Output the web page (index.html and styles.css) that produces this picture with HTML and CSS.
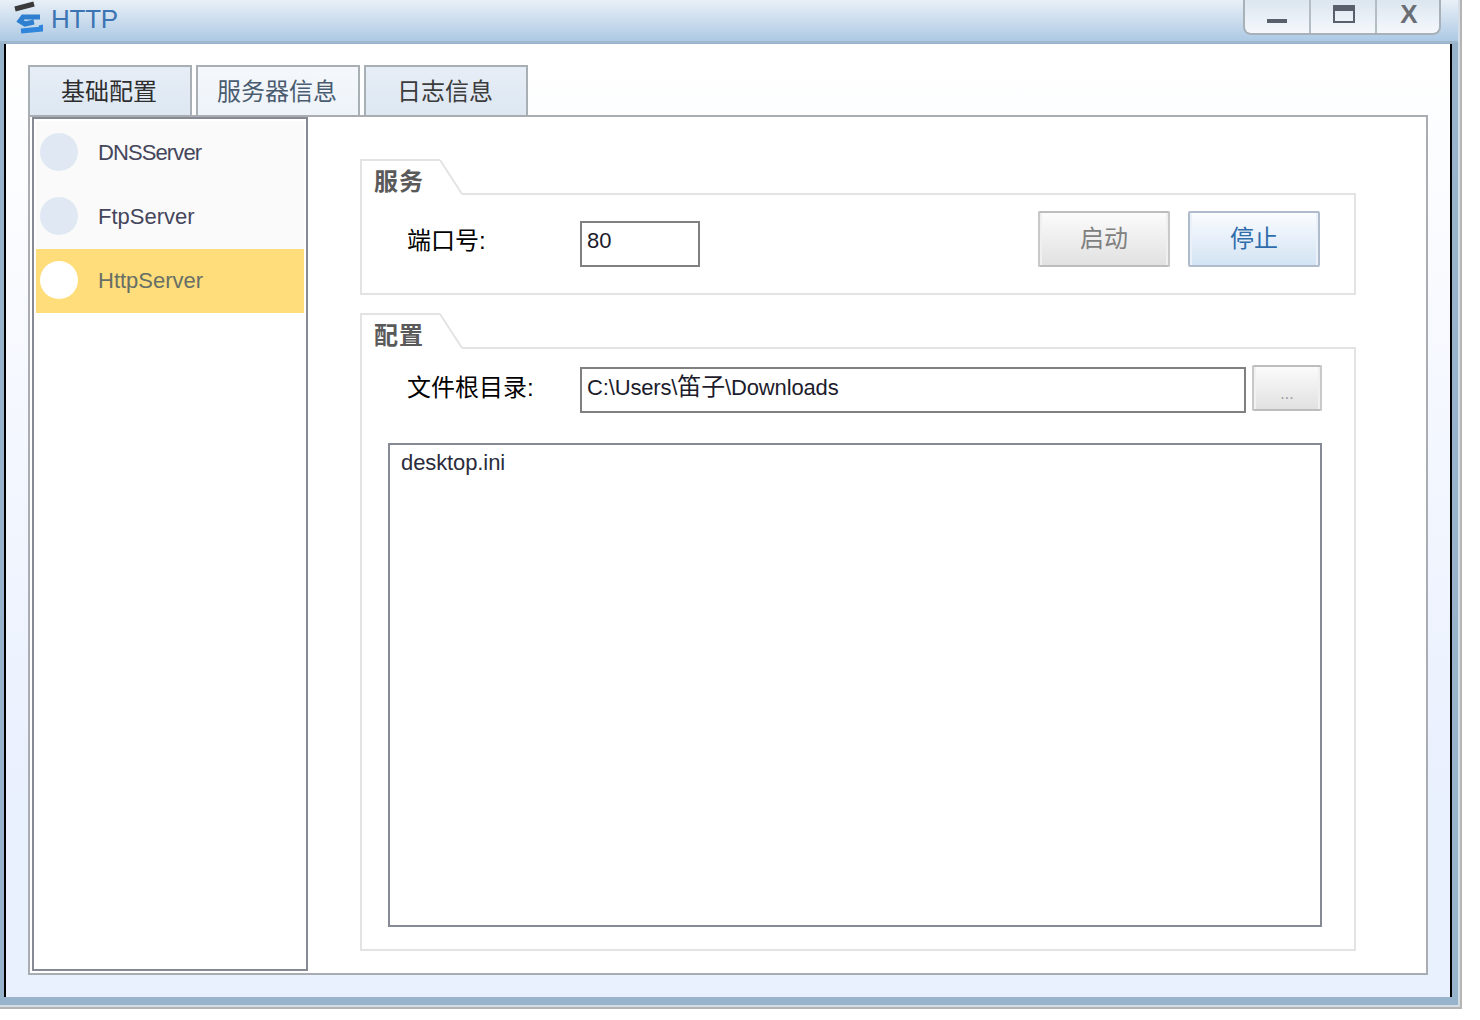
FILE: index.html
```html
<!DOCTYPE html>
<html lang="zh-CN">
<head>
<meta charset="utf-8">
<title>HTTP</title>
<link rel="stylesheet" href="styles.css">
</head>
<body>
<div class="window">
  <header class="titlebar">
    <svg class="app-icon" width="30" height="36" viewBox="0 0 30 36">
      <path d="M2 9 L21 4" stroke="#3a3a3a" stroke-width="5" fill="none"/>
      <path d="M27 17 H10 L7 21 L12 24 L21 22" stroke="#2f7fd0" stroke-width="5" fill="none"/>
      <path d="M8 31 L29 29 L28 25" stroke="#2f86dc" stroke-width="5" fill="none"/>
    </svg>
    <span class="app-title">HTTP</span>
    <div class="controls">
      <div class="control control-min"><span class="icon-min"></span></div>
      <div class="control"><span class="icon-max"></span></div>
      <div class="control control-close">X</div>
    </div>
  </header>
  <div class="frame">
    <main class="client">
      <nav class="tabs">
        <div class="tab tab-dark tab-first">基础配置</div>
        <div class="tab tab-light">服务器信息</div>
        <div class="tab tab-dark">日志信息</div>
      </nav>
      <section class="pane">
        <aside class="list">
          <div class="item"><span class="dot"></span><span class="tight">DNSServer</span></div>
          <div class="item"><span class="dot"></span><span>FtpServer</span></div>
          <div class="item item-active"><span class="dot"></span><span>HttpServer</span></div>
        </aside>
        <div class="content">
          <section class="group">
            <div class="group-head">
              <div class="group-tab">服务
                <svg class="group-slant" width="24" height="36" viewBox="0 0 24 36"><path d="M0 1 L22 35" stroke="#e3e3e3" stroke-width="2" fill="none"/></svg>
              </div>
              <div class="group-line"></div>
            </div>
            <div class="group-body service">
              <div class="field-label field-label-port">端口号:</div>
              <div class="input input-port">80</div>
              <div class="actions">
                <div class="btn btn-off">启动</div>
                <div class="btn btn-on">停止</div>
              </div>
            </div>
          </section>
          <section class="group group-fill">
            <div class="group-head">
              <div class="group-tab">配置
                <svg class="group-slant" width="24" height="36" viewBox="0 0 24 36"><path d="M0 1 L22 35" stroke="#e3e3e3" stroke-width="2" fill="none"/></svg>
              </div>
              <div class="group-line"></div>
            </div>
            <div class="group-body config">
              <div class="path-row">
                <div class="field-label">文件根目录:</div>
                <div class="input input-path">C:\Users\<span class="cjk">笛子</span>\Downloads</div>
                <div class="btn btn-off btn-browse">...</div>
              </div>
              <div class="files">desktop.ini</div>
            </div>
          </section>
        </div>
      </section>
    </main>
  </div>
</div>
</body>
</html>
```
FILE: styles.css
```css
* { box-sizing: border-box; }
html, body { margin: 0; height: 100%; background: #fff; }
body { font-family: "Liberation Sans", "Noto Sans CJK SC", sans-serif; font-size: 22px; color: #000; overflow: hidden; }

.window {
  width: 1462px;
  height: 1009px;
  display: flex;
  flex-direction: column;
  border-right: 2px solid #b4b4b4;
  border-bottom: 2px solid #b4b4b4;
  background: #d5dde6;
}

.titlebar {
  height: 43px;
  flex: none;
  display: flex;
  align-items: flex-start;
  padding-left: 13px;
  margin-right: 2px;
  background: linear-gradient(#e9f0f7, #adc9e4);
  border-bottom: 2px solid #a0b8cc;
}
.app-icon { flex: none; }
.app-title { margin: 4px 0 0 8px; font-size: 26px; line-height: 30px; letter-spacing: -0.25px; color: #3c74b4; }

.controls {
  margin: 0 17px 0 auto;
  width: 198px;
  height: 35px;
  display: flex;
  border: 2px solid #a9b1b8;
  border-top: 0;
  border-radius: 0 0 8px 8px;
  background: linear-gradient(#dbe6f0, #f5f8fc);
}
.control {
  flex: none;
  width: 66px;
  display: flex;
  align-items: center;
  justify-content: center;
  border-left: 2px solid #b5bdc4;
}
.control-min { width: 64px; border-left: 0; }
.icon-min { width: 20px; height: 4px; margin-top: 8px; background: #5a5f6c; }
.icon-max { width: 22px; height: 18px; margin: -6px 0 0 2px; border: 2px solid #5a5f6c; border-top-width: 6px; }
.control-close { width: 64px; font-size: 26px; line-height: 26px; font-weight: 700; color: #6a6e74; padding: 0 0 6px 2px; }

.frame {
  flex: 1;
  min-height: 0;
  display: flex;
  padding: 1px 8px 10px 4px;
  background: #98b3cc;
  box-shadow: inset 0 -2px 0 #d3dbe3, inset -2px 0 0 #d3dbe3;
}

.client {
  flex: 1;
  min-width: 0;
  padding: 21px 22px 22px;
  display: flex;
  flex-direction: column;
  border-left: 2px solid #000;
  border-right: 2px solid #000;
  background: linear-gradient(#fff, #e9f0fe 80%);
}

.tabs { display: flex; gap: 4px; margin-bottom: -2px; position: relative; z-index: 1; }
.tab {
  width: 164px;
  height: 52px;
  display: flex;
  align-items: center;
  justify-content: center;
  padding: 0 2px 4px 0;
  font-size: 24px;
  border: 2px solid #a9b0b5;
}
.tab-dark { color: #3c3c3c; background: linear-gradient(#e6edf6, #dde8f2); }
.tab-light { color: #4a5c70; background: linear-gradient(#f4f8fc, #eef3f9); }
.tab-first { color: #2e2e2e; }

.pane {
  flex: 1;
  min-height: 0;
  display: flex;
  padding: 0 0 0 2px;
  border: 2px solid #a9adb2;
  background: #fff;
  position: relative;
  z-index: 2;
}

.list {
  width: 276px;
  flex: none;
  margin-bottom: 2px;
  padding: 2px;
  border: 2px solid #868a94;
  background: #fff;
}
.item {
  height: 64px;
  display: flex;
  align-items: center;
  gap: 20px;
  padding-left: 4px;
  background: #fafafa;
  color: #45465c;
}
.tight { letter-spacing: -0.9px; }
.dot { width: 38px; height: 38px; margin-top: -2px; border-radius: 50%; background: #dfe8f3; flex: none; }
.item-active { background: #fedd7a; color: #686f66; }
.item-active .dot { background: #fff; }

.content {
  flex: 1;
  min-width: 0;
  display: flex;
  flex-direction: column;
  gap: 18px;
  padding: 42px 70px 22px 52px;
}
.group { display: flex; flex-direction: column; }
.group-fill { flex: 1; min-height: 0; }

.group-head { display: flex; height: 36px; flex: none; }
.group-tab {
  width: 80px;
  padding: 5px 0 0 12px;
  position: relative;
  font-size: 24px;
  line-height: 32px;
  font-weight: 700;
  letter-spacing: 1px;
  color: #5a5a5a;
  white-space: nowrap;
  border-left: 2px solid #e3e3e3;
  border-top: 2px solid #e3e3e3;
}
.group-slant { position: absolute; left: 78px; top: -2px; }
.group-line { flex: 1; margin-left: 22px; border-bottom: 2px solid #e3e3e3; }
.group-body {
  border: 2px solid #e3e3e3;
  border-top: 0;
}
.group-fill .group-body { flex: 1; min-height: 0; display: flex; flex-direction: column; padding: 16px 32px 22px 26px; }

.service { display: flex; align-items: flex-end; height: 100px; padding: 16px 34px 26px 26px; }
.field-label { width: 192px; padding-left: 19px; flex: none; font-size: 24px; line-height: 46px; height: 46px; }
.field-label-port { line-height: 40px; }
.input {
  height: 46px;
  border: 2px solid #808080;
  padding-left: 5px;
  line-height: 36px;
  background: #fff;
  white-space: nowrap;
  color: #1c1c2c;
}
.input-port { width: 120px; }
.input-path { flex: 1; min-width: 0; margin-top: 2px; letter-spacing: -0.15px; }
.cjk { font-size: 24px; }
.actions { margin-left: auto; display: flex; gap: 18px; }

.btn {
  width: 132px;
  height: 56px;
  display: flex;
  align-items: center;
  justify-content: center;
  font-size: 24px;
  border: 2px solid #bdbdbd;
  border-left-color: #c8c8c8;
  border-right-color: #c8c8c8;
  border-radius: 2px;
  padding-bottom: 6px;
}
.btn-off { color: #808080; background: linear-gradient(#fbfbfb, #e1e1e1); box-shadow: inset 2px 0 0 #f0f0f0, inset -2px 0 0 #f0f0f0; }
.btn-on { color: #2f6cab; border-color: #b0bccc; background: linear-gradient(#fafcff, #d3e3f3); box-shadow: inset 2px 0 0 #eaf1f8, inset -2px 0 0 #eaf1f8; }
.btn-browse { width: 70px; height: 46px; margin-left: 6px; flex: none; font-size: 16px; align-items: flex-end; padding-bottom: 6px; color: #999; }

.path-row { display: flex; align-items: flex-start; flex: none; }

.files {
  flex: 1;
  min-height: 0;
  margin-top: 30px;
  padding: 4px 11px;
  line-height: 28px;
  letter-spacing: -0.1px;
  border: 2px solid #868a94;
  background: #fff;
  color: #2c2c3c;
}
```
